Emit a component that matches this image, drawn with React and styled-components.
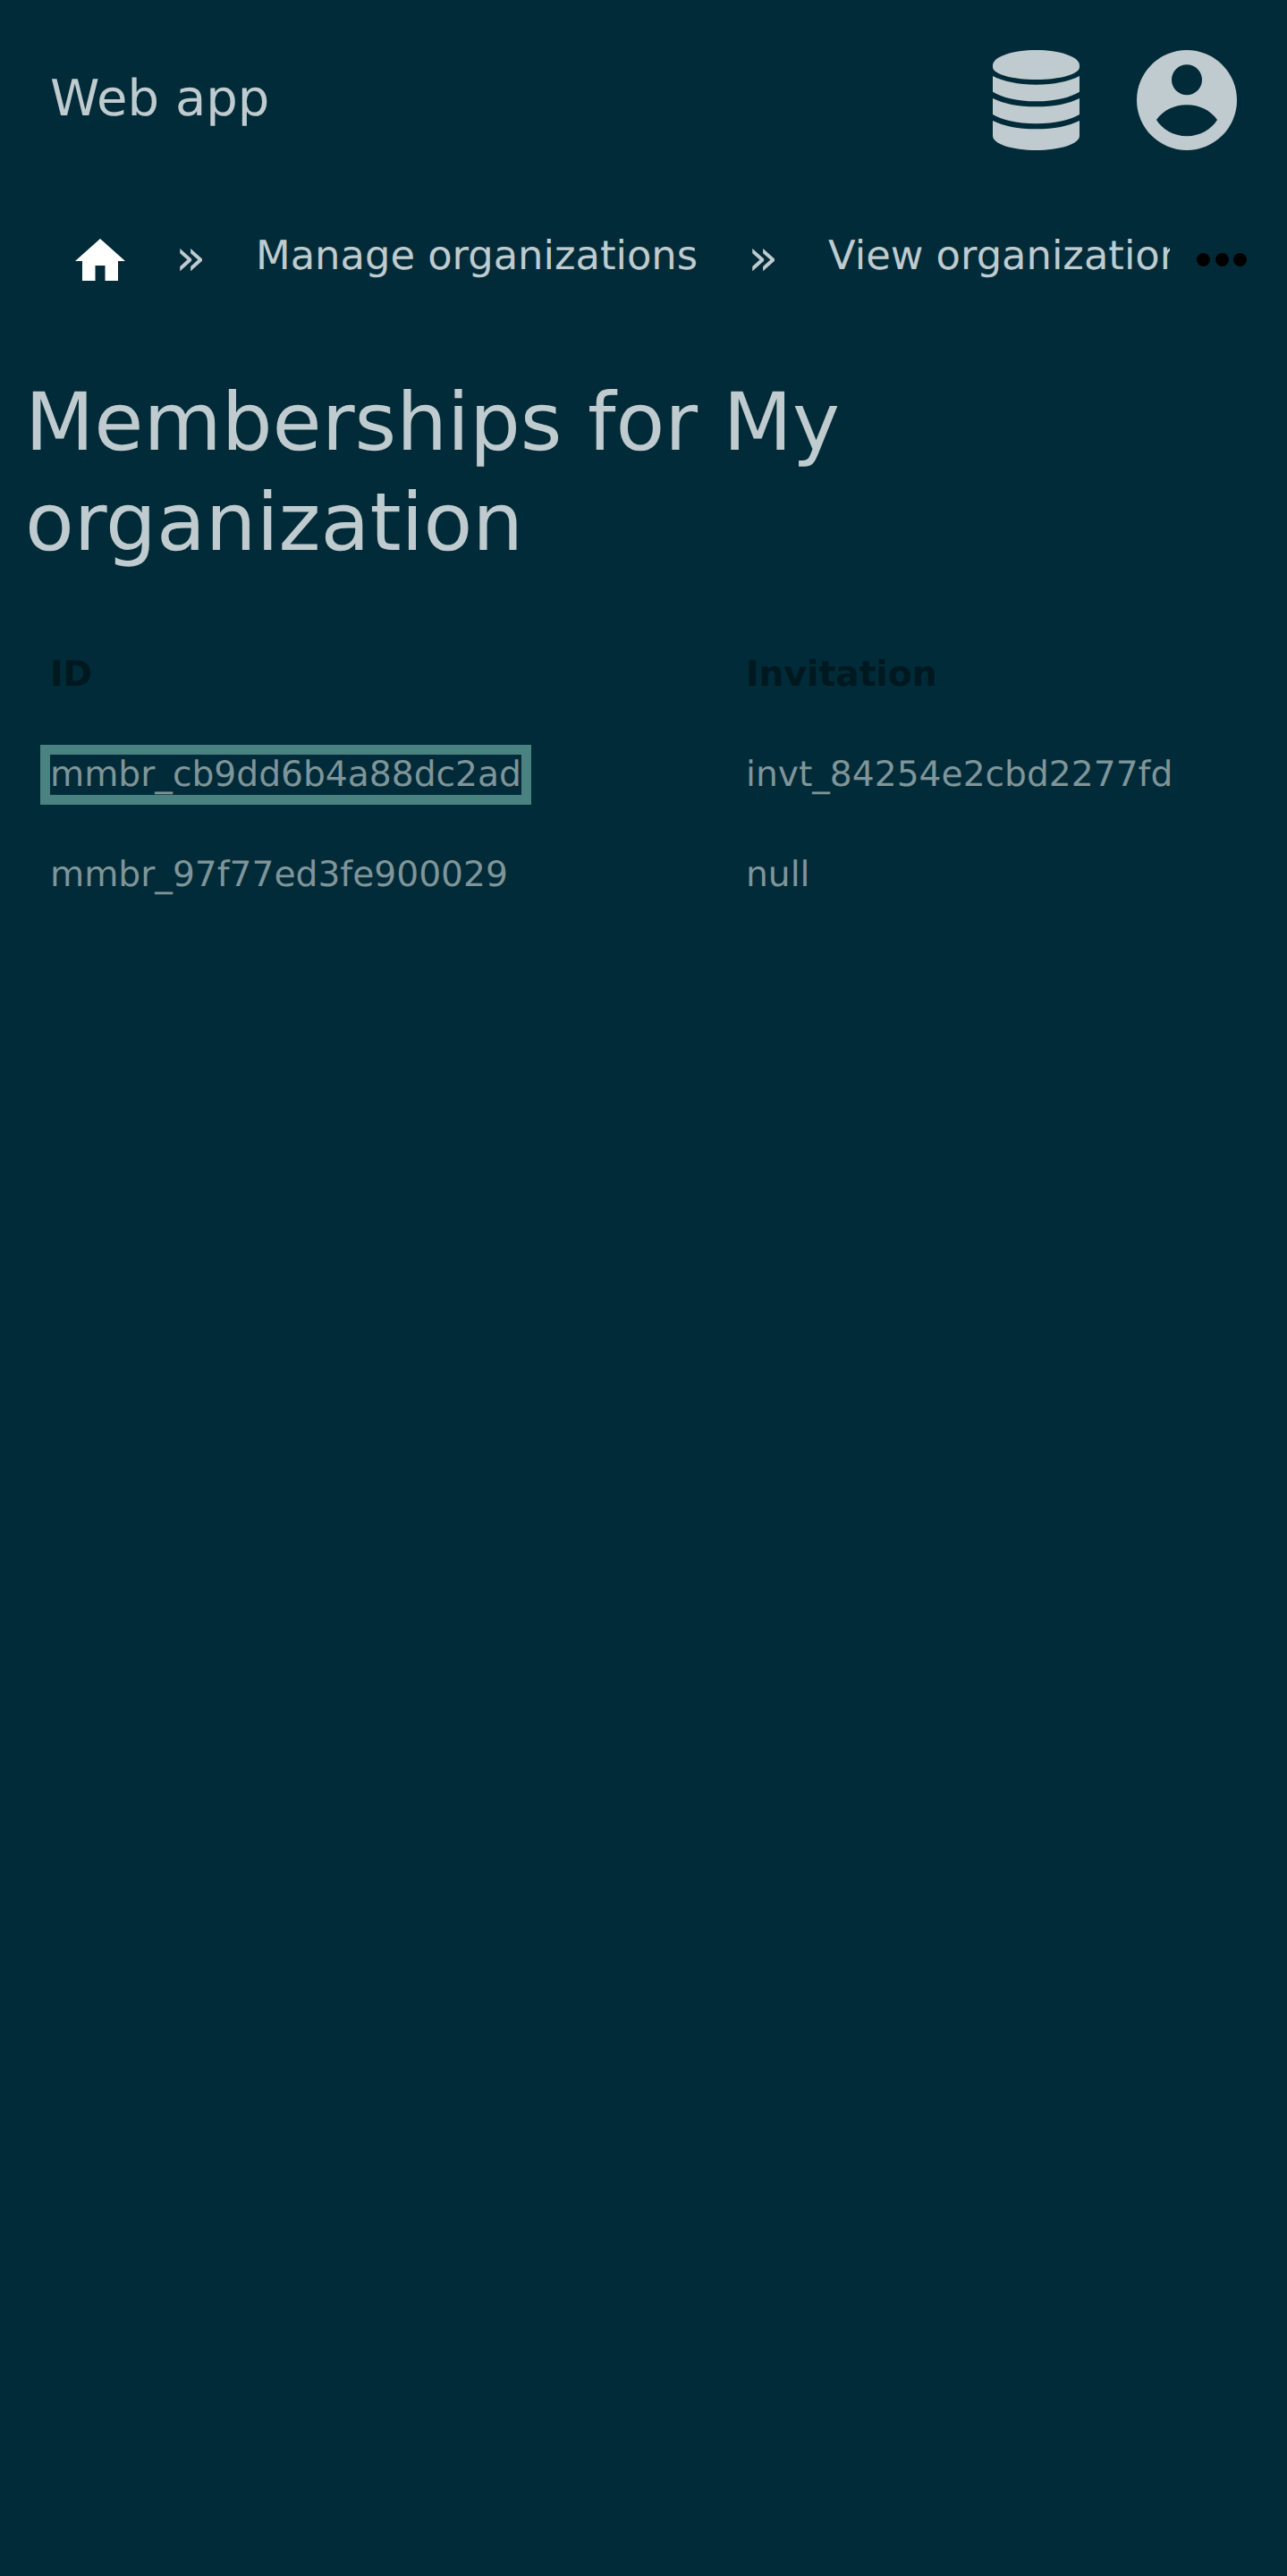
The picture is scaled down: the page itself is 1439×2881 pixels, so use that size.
import React from "react";
import styled, { createGlobalStyle } from "styled-components";

const Global = createGlobalStyle`
  html, body { margin: 0; padding: 0; background: #012b38; }
  body {
    font-family: "DejaVu Sans", sans-serif;
    color: #bfcbce;
    text-rendering: geometricPrecision;
  }
`;

const Page = styled.div`
  width: 1439px;
  min-height: 2881px;
  background: #012b38;
  overflow: hidden;
`;

const Header = styled.header`
  display: flex;
  align-items: center;
  height: 224px;
  padding: 0 56px;
  box-sizing: border-box;
`;

const Brand = styled.a`
  flex: 1;
  margin-top: -2px;
  font-size: 56px;
  line-height: 1;
  color: #bfcbce;
`;

const IconGroup = styled.div`
  display: flex;
  align-items: center;
  gap: 64px;
  color: #bfcbce;
`;

const Crumbs = styled.nav`
  display: flex;
  align-items: center;
  height: 112px;
  padding-left: 84px;
`;

const HomeLink = styled.a`
  display: flex;
  width: 56px;
  margin-top: 21px;
  color: #fff;
`;

const Separator = styled.span`
  flex: none;
  width: 34px;
  margin: 17px 56px 0;
  font-size: 56px;
  line-height: 56px;
  color: #bfcbce;
`;

const Crumb = styled.a`
  font-size: 44.8px;
  line-height: 56px;
  margin-top: 12px;
  color: #bfcbce;
  white-space: nowrap;
`;

const ClippedCrumb = styled(Crumb)`
  width: 382px;
  overflow: hidden;
`;

const MoreDots = styled.span`
  display: flex;
  gap: 5.6px;
  margin: 20px 0 0 30px;
`;

const Dot = styled.i`
  display: block;
  width: 15px;
  height: 15px;
  border-radius: 50%;
  background: #000;
`;

const Title = styled.h1`
  margin: 0;
  padding: 81px 28px 0;
  max-width: 1000px;
  font-size: 89.6px;
  font-weight: 400;
  line-height: 112px;
  color: #bfcbce;
`;

const Table = styled.table`
  border-collapse: collapse;
  table-layout: fixed;
  width: 1439px;
  margin-top: 57px;
`;

const HeadCell = styled.th`
  width: ${(p) => p.$width || "auto"};
  height: 112.4px;
  padding: 0 0 0 ${(p) => p.$left || "0"};
  box-sizing: border-box;
  text-align: left;
  font-size: 39.2px;
  font-weight: 700;
  color: #001820;
`;

const Cell = styled.td`
  height: 112.4px;
  padding: 0 0 0 ${(p) => p.$left || "0"};
  box-sizing: border-box;
  font-size: 39.2px;
  color: #7f9599;
  white-space: nowrap;
`;

const RowLink = styled.a`
  outline: ${(p) => (p.$focused ? "11.2px solid #4a8281" : "none")};
`;

const DatabaseIcon = () => (
  <svg width="97" height="112" viewBox="0 0 97 112" fill="currentColor" aria-hidden="true">
    <path d="M48.500 0C75 0 97 7.500 97 17V19C97 27 75 33 48.500 33S0 27 0 19V17C0 7.500 22 0 48.500 0Z" />
    <path d="M0 29C12 35 28 38.700 48.500 38.700S85 35 97 29V46.700C88 52.500 70 57.300 48.500 57.300S9 52.500 0 46.700Z" />
    <path d="M0 54C12 60 28 63.300 48.500 63.300S85 60 97 54V72C88 77.500 70 82.300 48.500 82.300S9 77.500 0 72Z" />
    <path d="M0 79C12 85 28 88.300 48.500 88.300S85 85 97 79V96C97 105 75 112 48.500 112S0 105 0 96Z" />
  </svg>
);

const UserIcon = () => (
  <svg width="112" height="112" viewBox="0 0 112 112" aria-hidden="true">
    <path
      fill="currentColor"
      fillRule="evenodd"
      d="M56 0a56 56 0 1 0 0 112A56 56 0 0 0 56 0ZM56 16.300a17 17 0 1 1 0 34a17 17 0 0 1 0-34ZM22 78C30 67 42 61.300 56 61.300S82 67 90 78C84 88 71 96.300 56 96.300S28 88 22 78Z"
    />
  </svg>
);

const HomeIcon = () => (
  <svg width="56" height="47" viewBox="0 0 56 47" fill="currentColor" aria-hidden="true">
    <path d="M28 0 56 25H48V47H33.500V30H22.500V47H8V25H0Z" />
  </svg>
);

export default function App() {
  return (
    <Page>
      <Global />
      <Header>
        <Brand>Web app</Brand>
        <IconGroup>
          <DatabaseIcon />
          <UserIcon />
        </IconGroup>
      </Header>
      <Crumbs>
        <HomeLink><HomeIcon /></HomeLink>
        <Separator>»</Separator>
        <Crumb>Manage organizations</Crumb>
        <Separator>»</Separator>
        <ClippedCrumb>View organization</ClippedCrumb>
        <MoreDots><Dot /><Dot /><Dot /></MoreDots>
      </Crumbs>
      <Title>Memberships for My organization</Title>
      <Table>
        <thead>
          <tr>
            <HeadCell $width="834px" $left="56px">ID</HeadCell>
            <HeadCell>Invitation</HeadCell>
          </tr>
        </thead>
        <tbody>
          <tr>
            <Cell $left="56px"><RowLink $focused>mmbr_cb9dd6b4a88dc2ad</RowLink></Cell>
            <Cell>invt_84254e2cbd2277fd</Cell>
          </tr>
          <tr>
            <Cell $left="56px"><RowLink>mmbr_97f77ed3fe900029</RowLink></Cell>
            <Cell>null</Cell>
          </tr>
        </tbody>
      </Table>
    </Page>
  );
}
